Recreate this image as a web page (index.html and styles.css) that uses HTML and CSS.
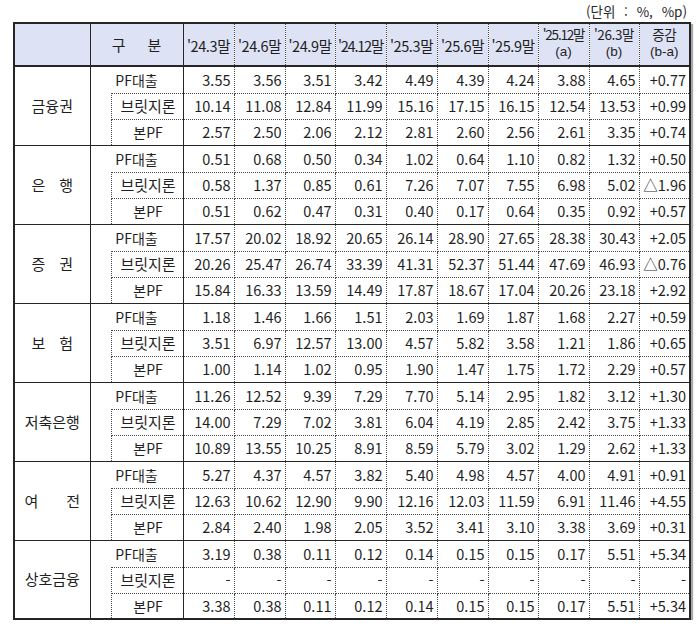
FILE: index.html
```html
<!DOCTYPE html>
<html lang="ko">
<head>
<meta charset="utf-8">
<title>PF 연체율</title>
<link rel="stylesheet" href="styles.css">
</head>
<body>
<div class="page">
  <div class="unit">(단위 : %, %p)</div>
  <table class="tbl">
    <colgroup>
      <col class="c-g"><col class="c-n"><col class="c-s">
      <col class="c-d"><col class="c-d"><col class="c-d5"><col class="c-d"><col class="c-d"><col class="c-d"><col class="c-d5"><col class="c-d"><col class="c-d5"><col class="c-d">
    </colgroup>
    <thead>
      <tr class="hrow">
        <th class="h0"></th>
        <th class="h1" colspan="2"><span class="w23">구</span>분</th>
        <th class="hd">'24.3말</th>
        <th class="hd">'24.6말</th>
        <th class="hd">'24.9말</th>
        <th class="hd tight">'24.12말</th>
        <th class="hd">'25.3말</th>
        <th class="hd">'25.6말</th>
        <th class="hd">'25.9말</th>
        <th class="hd two tight"><span class="l1">'25.12말</span><span class="l2">(a)</span></th>
        <th class="hd two"><span class="l1">'26.3말</span><span class="l2">(b)</span></th>
        <th class="hd two"><span class="l1">증감</span><span class="l2">(b-a)</span></th>
      </tr>
    </thead>
    <tbody>
      <!-- 금융권 -->
      <tr class="r1">
        <td class="g" rowspan="3">금융권</td>
        <td class="s1" colspan="2">PF대출</td>
        <td>3.55</td><td>3.56</td><td>3.51</td><td>3.42</td><td>4.49</td><td>4.39</td><td>4.24</td><td>3.88</td><td>4.65</td><td>+0.77</td>
      </tr>
      <tr class="r2">
        <td class="n" rowspan="2"></td>
        <td class="s2 st">브릿지론</td>
        <td>10.14</td><td>11.08</td><td>12.84</td><td>11.99</td><td>15.16</td><td>17.15</td><td>16.15</td><td>12.54</td><td>13.53</td><td>+0.99</td>
      </tr>
      <tr class="r3">
        <td class="s2">본PF</td>
        <td>2.57</td><td>2.50</td><td>2.06</td><td>2.12</td><td>2.81</td><td>2.60</td><td>2.56</td><td>2.61</td><td>3.35</td><td>+0.74</td>
      </tr>
      <!-- 은행 -->
      <tr class="r1">
        <td class="g" rowspan="3"><span class="w14">은</span>행</td>
        <td class="s1" colspan="2">PF대출</td>
        <td>0.51</td><td>0.68</td><td>0.50</td><td>0.34</td><td>1.02</td><td>0.64</td><td>1.10</td><td>0.82</td><td>1.32</td><td>+0.50</td>
      </tr>
      <tr class="r2">
        <td class="n" rowspan="2"></td>
        <td class="s2 st">브릿지론</td>
        <td>0.58</td><td>1.37</td><td>0.85</td><td>0.61</td><td>7.26</td><td>7.07</td><td>7.55</td><td>6.98</td><td>5.02</td><td>△1.96</td>
      </tr>
      <tr class="r3">
        <td class="s2">본PF</td>
        <td>0.51</td><td>0.62</td><td>0.47</td><td>0.31</td><td>0.40</td><td>0.17</td><td>0.64</td><td>0.35</td><td>0.92</td><td>+0.57</td>
      </tr>
      <!-- 증권 -->
      <tr class="r1">
        <td class="g" rowspan="3"><span class="w14">증</span>권</td>
        <td class="s1" colspan="2">PF대출</td>
        <td>17.57</td><td>20.02</td><td>18.92</td><td>20.65</td><td>26.14</td><td>28.90</td><td>27.65</td><td>28.38</td><td>30.43</td><td>+2.05</td>
      </tr>
      <tr class="r2">
        <td class="n" rowspan="2"></td>
        <td class="s2 st">브릿지론</td>
        <td>20.26</td><td>25.47</td><td>26.74</td><td>33.39</td><td>41.31</td><td>52.37</td><td>51.44</td><td>47.69</td><td>46.93</td><td>△0.76</td>
      </tr>
      <tr class="r3">
        <td class="s2">본PF</td>
        <td>15.84</td><td>16.33</td><td>13.59</td><td>14.49</td><td>17.87</td><td>18.67</td><td>17.04</td><td>20.26</td><td>23.18</td><td>+2.92</td>
      </tr>
      <!-- 보험 -->
      <tr class="r1">
        <td class="g" rowspan="3"><span class="w14">보</span>험</td>
        <td class="s1" colspan="2">PF대출</td>
        <td>1.18</td><td>1.46</td><td>1.66</td><td>1.51</td><td>2.03</td><td>1.69</td><td>1.87</td><td>1.68</td><td>2.27</td><td>+0.59</td>
      </tr>
      <tr class="r2">
        <td class="n" rowspan="2"></td>
        <td class="s2 st">브릿지론</td>
        <td>3.51</td><td>6.97</td><td>12.57</td><td>13.00</td><td>4.57</td><td>5.82</td><td>3.58</td><td>1.21</td><td>1.86</td><td>+0.65</td>
      </tr>
      <tr class="r3">
        <td class="s2">본PF</td>
        <td>1.00</td><td>1.14</td><td>1.02</td><td>0.95</td><td>1.90</td><td>1.47</td><td>1.75</td><td>1.72</td><td>2.29</td><td>+0.57</td>
      </tr>
      <!-- 저축은행 -->
      <tr class="r1">
        <td class="g" rowspan="3">저축은행</td>
        <td class="s1" colspan="2">PF대출</td>
        <td>11.26</td><td>12.52</td><td>9.39</td><td>7.29</td><td>7.70</td><td>5.14</td><td>2.95</td><td>1.82</td><td>3.12</td><td>+1.30</td>
      </tr>
      <tr class="r2">
        <td class="n" rowspan="2"></td>
        <td class="s2 st">브릿지론</td>
        <td>14.00</td><td>7.29</td><td>7.02</td><td>3.81</td><td>6.04</td><td>4.19</td><td>2.85</td><td>2.42</td><td>3.75</td><td>+1.33</td>
      </tr>
      <tr class="r3">
        <td class="s2">본PF</td>
        <td>10.89</td><td>13.55</td><td>10.25</td><td>8.91</td><td>8.59</td><td>5.79</td><td>3.02</td><td>1.29</td><td>2.62</td><td>+1.33</td>
      </tr>
      <!-- 여전 -->
      <tr class="r1">
        <td class="g" rowspan="3"><span class="w28">여</span>전</td>
        <td class="s1" colspan="2">PF대출</td>
        <td>5.27</td><td>4.37</td><td>4.57</td><td>3.82</td><td>5.40</td><td>4.98</td><td>4.57</td><td>4.00</td><td>4.91</td><td>+0.91</td>
      </tr>
      <tr class="r2">
        <td class="n" rowspan="2"></td>
        <td class="s2 st">브릿지론</td>
        <td>12.63</td><td>10.62</td><td>12.90</td><td>9.90</td><td>12.16</td><td>12.03</td><td>11.59</td><td>6.91</td><td>11.46</td><td>+4.55</td>
      </tr>
      <tr class="r3">
        <td class="s2">본PF</td>
        <td>2.84</td><td>2.40</td><td>1.98</td><td>2.05</td><td>3.52</td><td>3.41</td><td>3.10</td><td>3.38</td><td>3.69</td><td>+0.31</td>
      </tr>
      <!-- 상호금융 -->
      <tr class="r1">
        <td class="g" rowspan="3">상호금융</td>
        <td class="s1" colspan="2">PF대출</td>
        <td>3.19</td><td>0.38</td><td>0.11</td><td>0.12</td><td>0.14</td><td>0.15</td><td>0.15</td><td>0.17</td><td>5.51</td><td>+5.34</td>
      </tr>
      <tr class="r2">
        <td class="n" rowspan="2"></td>
        <td class="s2 st">브릿지론</td>
        <td>-</td><td>-</td><td>-</td><td>-</td><td>-</td><td>-</td><td>-</td><td>-</td><td>-</td><td>-</td>
      </tr>
      <tr class="r3">
        <td class="s2">본PF</td>
        <td>3.38</td><td>0.38</td><td>0.11</td><td>0.12</td><td>0.14</td><td>0.15</td><td>0.15</td><td>0.17</td><td>5.51</td><td>+5.34</td>
      </tr>
    </tbody>
  </table>
</div>
</body>
</html>
```

FILE: styles.css
```css
html, body {
  margin: 0;
  padding: 0;
  background: #ffffff;
}

.page {
  width: 699px;
  font-family: "Noto Sans CJK KR", "Noto Sans", sans-serif;
  color: #1f1f1f;
}

.unit {
  height: 22px;
  line-height: 22px;
  font-size: 13.5px;
  word-spacing: 5px;
  text-align: right;
  padding-right: 12px;
  color: #2a2a2a;
}

.tbl {
  margin-left: 13px;
  width: 676px;
  table-layout: fixed;
  border-collapse: collapse;
  border: 2px solid #262626;
  box-shadow: 2px 2px 1px #a8a8a8;
  font-size: 14.5px;
}

.c-g { width: 76px; }
.c-n { width: 21px; }
.c-s { width: 72px; }
.c-d { width: 51px; }
.c-d5 { width: 50px; }

.tbl th,
.tbl td {
  padding: 0;
  line-height: 16px;
  white-space: nowrap;
  overflow: hidden;
  vertical-align: middle;
  border-top: none;
  border-left: none;
  border-right: 1px dotted #4a4a4a;
  border-bottom: 1px dotted #4a4a4a;
}

.hrow { height: 42px; }

.tbl th {
  background: #dde3f4;
  font-weight: normal;
  border-bottom: 2px solid #262626;
  text-align: center;
}

.tbl th.h0,
.tbl th.h1 {
  border-right: 1px solid #262626;
}

.tbl th.h1 {
  font-size: 15px;
  padding-top: 1px;
}

.w23 { margin-right: 22px; }
.w14 { margin-right: 14px; }
.w28 { margin-right: 28px; }

.tbl th.hd {
  letter-spacing: -0.4px;
  padding-top: 2px;
}

.tbl th.tight {
  letter-spacing: -1.2px;
}

.tbl th.two {
  padding-top: 0;
  padding-bottom: 5px;
}

.l1, .l2 {
  display: block;
}

.l1 {
  font-size: 13.5px;
  line-height: 20px;
}

.l2 {
  font-family: "Liberation Sans", "Noto Sans", sans-serif;
  font-size: 13.5px;
  line-height: 16px;
  letter-spacing: 0;
}

.r1 { height: 27px; }
.r2 { height: 26px; }
.r3 { height: 26px; }

.tbl td {
  text-align: right;
  padding-right: 3px;
}

.tbl td.g {
  text-align: center;
  padding-right: 0;
  font-size: 15px;
  border-right: 1px solid #262626;
  border-bottom: 1px solid #262626;
}

.tbl td.s1 {
  text-align: center;
  padding-right: 0;
  font-size: 14px;
  border-right: 1px solid #262626;
  border-bottom: none;
}

.tbl td.n {
  padding: 0;
  border-top: none;
  border-bottom: 1px solid #262626;
}

.tbl td.s2 {
  text-align: center;
  padding-right: 0;
  padding-left: 2px;
  font-size: 15px;
  border-right: 1px solid #262626;
}

.tbl td.st {
  border-top: 1px dotted #4a4a4a;
}

.tbl tr.r3 td {
  border-bottom: 1px solid #262626;
}

.tbl tr.r3 td.s2 {
  font-size: 14px;
}
```
